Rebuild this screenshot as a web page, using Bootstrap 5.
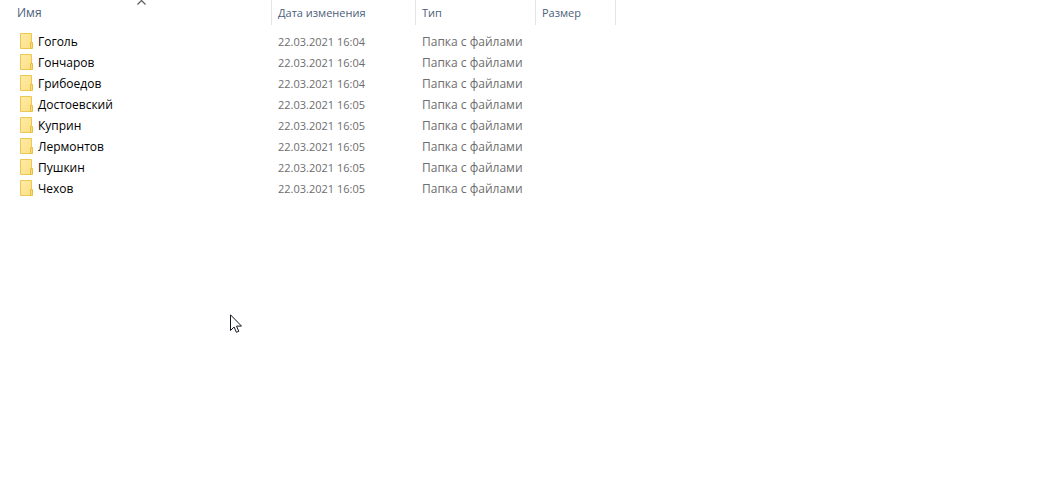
<!DOCTYPE html>
<html lang="ru">
<head>
<meta charset="utf-8">
<meta name="viewport" content="width=device-width, initial-scale=1">
<title>Папки</title>
<link href="https://cdn.jsdelivr.net/npm/bootstrap@5.3.0/dist/css/bootstrap.min.css" rel="stylesheet">
<style>
  body { font-family: "Open Sans", "Noto Sans", sans-serif; font-size: 12px; line-height: 20px; color: #000; background: #fff; }
  .files { table-layout: fixed; width: 616px; border-collapse: separate; border-spacing: 0; }
  .files th { height: 25px; padding: 3px 6px 2px; font-size: 11px; font-weight: 400; color: #4c607a; border-right: 1px solid #e5e5e5; }
  .files th:first-child { padding-left: 17px; font-size: 12px; }
  .files td { height: 21px; padding: 0 6px; color: #6d6d6d; white-space: nowrap; }
  .files td:first-child { padding-left: 20px; color: #000; }
  .files td:nth-child(2) { font-size: 11px; }
  .files .spacer td { height: 6px; }
  .c-name { width: 272px; }
  .c-date { width: 144px; }
  .c-type { width: 120px; }
  .c-size { width: 80px; }
  .folder { width: 14px; height: 16px; margin-bottom: 2px; }
  .sort-mark { top: 0; left: 137px; }
  .pointer { top: 314px; left: 230px; }
</style>
</head>
<body>
<svg width="0" height="0" class="position-absolute" aria-hidden="true">
  <defs>
    <linearGradient id="paper" x1="0" y1="0" x2="1" y2="1"><stop offset="0" stop-color="#ffeba6"/><stop offset="1" stop-color="#fddf85"/></linearGradient>
    <symbol id="folder" viewBox="0 0 14 16">
      <path d="M.5.5h11v15H.5z" fill="url(#paper)" stroke="#ebc850"/>
      <path d="M10.500 9.500h2v6h-2z" fill="#fbdc7c" stroke="#e6bf45"/>
    </symbol>
  </defs>
</svg>
<main>
  <table class="files">
    <colgroup><col class="c-name"><col class="c-date"><col class="c-type"><col class="c-size"></colgroup>
    <thead>
      <tr>
        <th scope="col" class="position-relative" aria-sort="ascending">Имя
          <svg class="sort-mark position-absolute" width="9" height="5" viewBox="0 0 9 5" aria-hidden="true"><path d="M.5 4.500l4-4 4 4" fill="none" stroke="#5a5a5a" stroke-width="1.200"/></svg>
        </th>
        <th scope="col">Дата изменения</th>
        <th scope="col">Тип</th>
        <th scope="col">Размер</th>
      </tr>
    </thead>
    <tbody>
      <tr class="spacer" aria-hidden="true"><td colspan="4"></td></tr>
      <tr><td><div class="d-flex align-items-center gap-1"><svg class="folder" aria-hidden="true"><use href="#folder"/></svg>Гоголь</div></td><td>22.03.2021 16:04</td><td>Папка с файлами</td><td></td></tr>
      <tr><td><div class="d-flex align-items-center gap-1"><svg class="folder" aria-hidden="true"><use href="#folder"/></svg>Гончаров</div></td><td>22.03.2021 16:04</td><td>Папка с файлами</td><td></td></tr>
      <tr><td><div class="d-flex align-items-center gap-1"><svg class="folder" aria-hidden="true"><use href="#folder"/></svg>Грибоедов</div></td><td>22.03.2021 16:04</td><td>Папка с файлами</td><td></td></tr>
      <tr><td><div class="d-flex align-items-center gap-1"><svg class="folder" aria-hidden="true"><use href="#folder"/></svg>Достоевский</div></td><td>22.03.2021 16:05</td><td>Папка с файлами</td><td></td></tr>
      <tr><td><div class="d-flex align-items-center gap-1"><svg class="folder" aria-hidden="true"><use href="#folder"/></svg>Куприн</div></td><td>22.03.2021 16:05</td><td>Папка с файлами</td><td></td></tr>
      <tr><td><div class="d-flex align-items-center gap-1"><svg class="folder" aria-hidden="true"><use href="#folder"/></svg>Лермонтов</div></td><td>22.03.2021 16:05</td><td>Папка с файлами</td><td></td></tr>
      <tr><td><div class="d-flex align-items-center gap-1"><svg class="folder" aria-hidden="true"><use href="#folder"/></svg>Пушкин</div></td><td>22.03.2021 16:05</td><td>Папка с файлами</td><td></td></tr>
      <tr><td><div class="d-flex align-items-center gap-1"><svg class="folder" aria-hidden="true"><use href="#folder"/></svg>Чехов</div></td><td>22.03.2021 16:05</td><td>Папка с файлами</td><td></td></tr>
    </tbody>
  </table>
</main>
<svg class="pointer position-absolute" width="12" height="19" viewBox="0 0 12 19" aria-hidden="true">
  <path d="M.5.8v15.700l3.600-3.500 2.300 5.300 2.400-1-2.300-5.200h5z" fill="#fff" stroke="#15151f"/>
</svg>
<script src="https://cdn.jsdelivr.net/npm/bootstrap@5.3.0/dist/js/bootstrap.bundle.min.js"></script>
</body>
</html>
